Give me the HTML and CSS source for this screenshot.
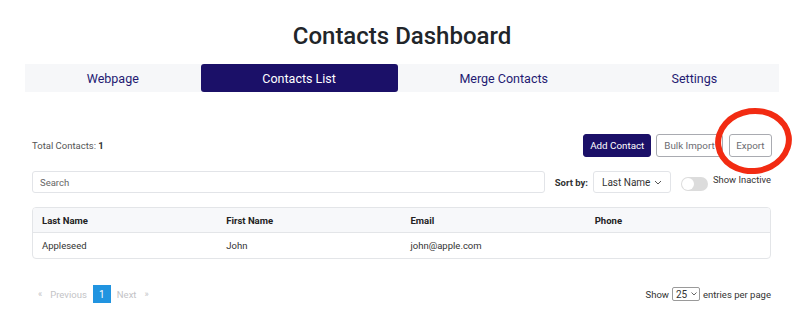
FILE: index.html
```html
<!DOCTYPE html>
<html lang="en">
<head>
<meta charset="utf-8">
<title>Contacts Dashboard</title>
<link rel="stylesheet" href="styles.css">
</head>
<body>
<div class="page">
  <h1 class="title">Contacts Dashboard</h1>
  <nav class="tabs">
    <a class="tab">Webpage</a>
    <a class="tab active">Contacts List</a>
    <a class="tab">Merge Contacts</a>
    <a class="tab">Settings</a>
  </nav>

  <div class="content">
    <div class="toolbar">
      <div class="total">Total Contacts: <b>1</b></div>
      <div class="actions">
        <button class="btn btn-primary">Add Contact</button>
        <button class="btn btn-outline bulk">Bulk Import</button>
        <button class="btn btn-outline export">Export<span class="annot"></span></button>
      </div>
    </div>

    <div class="filters">
      <div class="search">Search</div>
      <div class="sort">
        <span class="sort-label">Sort by:</span>
        <div class="select">Last Name
          <svg class="chev" width="8" height="5" viewBox="0 0 8 5"><path d="M1 1l3 3 3-3" fill="none" stroke="#555" stroke-width="1"/></svg>
        </div>
      </div>
      <div class="toggle-wrap">
        <span class="toggle"><span class="knob"></span></span>
        <span class="toggle-label">Show Inactive</span>
      </div>
    </div>

    <div class="table">
      <div class="row head">
        <div class="cell">Last Name</div>
        <div class="cell">First Name</div>
        <div class="cell">Email</div>
        <div class="cell">Phone</div>
      </div>
      <div class="row">
        <div class="cell">Appleseed</div>
        <div class="cell">John</div>
        <div class="cell">john@apple.com</div>
        <div class="cell"></div>
      </div>
    </div>

    <div class="footer">
      <div class="pager">
        <span class="pg-arrow left">«</span>
        <span class="pg-text">Previous</span>
        <span class="pg-num">1</span>
        <span class="pg-text">Next</span>
        <span class="pg-arrow right">»</span>
      </div>
      <div class="per-page">
        <span>Show</span>
        <span class="mini-select">25
          <svg width="6" height="4" viewBox="0 0 6 4"><path d="M0.5 0.5l2.5 2.5 2.5-2.5" fill="none" stroke="#555" stroke-width="0.9"/></svg>
        </span>
        <span>entries per page</span>
      </div>
    </div>
  </div>
</div>
</body>
</html>
```

FILE: styles.css
```css
* { box-sizing: border-box; }
html, body { margin: 0; background: #fff; }
body {
  font-family: Roboto, "Liberation Sans", Arial, sans-serif;
  color: #333;
  width: 800px;
  height: 333px;
  overflow: hidden;
}
.page {
  padding: 22px 21px 0 25px;
}
.title {
  margin: 0;
  text-align: center;
  font-size: 24px;
  line-height: 28px;
  font-weight: 500;
  color: #212529;
}
.tabs {
  margin-top: 14px;
  display: flex;
  background: #f6f7f9;
  height: 28px;
}
.tab {
  flex: 1 1 auto;
  display: flex;
  align-items: center;
  justify-content: center;
  font-size: 12.5px;
  color: #241a72;
  border-radius: 3px;
}
.tab.active {
  background: #1b1068;
  color: #fff;
}
.content {
  padding: 0 8px 0 7px;
}
.toolbar {
  margin-top: 42px;
  display: flex;
  align-items: center;
  justify-content: space-between;
  height: 23px;
}
.total {
  font-size: 9.5px;
  color: #555;
}
.total b { color: #333; font-weight: 700; }
.actions {
  display: flex;
  gap: 5px;
  align-items: center;
  margin-right: -1px;
}
.btn {
  font-family: inherit;
  height: 23px;
  padding: 0 6px;
  font-size: 9.8px;
  border-radius: 3px;
  margin: 0;
  white-space: nowrap;
}
.btn-primary {
  background: #1b1068;
  color: #fff;
  border: 1px solid #1b1068;
}
.btn-outline {
  background: #fff;
  color: #6c6c72;
  border: 1px solid #a9abb1;
}
.bulk {
  padding: 0 7px 0 7px;
}
.export {
  position: relative;
  padding: 0 6.5px;
  margin-left: 1px;
}
.annot {
  position: absolute;
  left: -15px;
  top: -27px;
  width: 77px;
  height: 66px;
  border: 6px solid #f22b12;
  border-radius: 50%;
  transform: rotate(-8deg);
}
.filters {
  margin-top: 14px;
  display: flex;
  align-items: center;
  height: 22px;
}
.search {
  flex: 1 1 auto;
  min-width: 0;
  height: 22px;
  border: 1px solid #e2e4e8;
  border-radius: 3px;
  font-size: 9.5px;
  color: #666;
  display: flex;
  align-items: center;
  padding-left: 7px;
}
.sort {
  flex: 0 0 auto;
  margin-left: 10px;
  display: flex;
  align-items: center;
  gap: 5px;
  white-space: nowrap;
}
.sort-label {
  font-size: 9.5px;
  font-weight: 700;
  color: #333;
}
.select {
  width: 78px;
  height: 22px;
  border: 1px solid #e2e4e8;
  border-radius: 3px;
  font-size: 10px;
  color: #333;
  display: flex;
  align-items: center;
  justify-content: space-between;
  padding: 0 8px 0 8px;
}
.toggle-wrap {
  flex: 0 0 auto;
  margin-left: 10px;
  display: flex;
  align-items: flex-start;
  gap: 5px;
  white-space: nowrap;
}
.toggle {
  width: 27px;
  height: 14px;
  border-radius: 7px;
  background: #dcdcdc;
  position: relative;
  margin-top: 4px;
}
.knob {
  position: absolute;
  left: 1px;
  top: 1px;
  width: 12px;
  height: 12px;
  border-radius: 50%;
  background: #fff;
}
.toggle-label {
  font-size: 9.4px;
  color: #333;
  line-height: 12px;
  margin-top: 1px;
}
.table {
  margin-top: 14px;
  border: 1px solid #e3e5e8;
  border-radius: 4px;
  overflow: hidden;
}
.row {
  display: grid;
  grid-template-columns: repeat(4, 1fr);
  height: 25px;
  align-items: center;
}
.row.head {
  background: #f7f8fa;
  border-bottom: 1px solid #e3e5e8;
  height: 25px;
}
.cell {
  padding-left: 9px;
  font-size: 9.5px;
  color: #333;
}
.head .cell {
  font-weight: 700;
  color: #222;
}
.footer {
  margin-top: 26px;
  display: flex;
  justify-content: space-between;
  align-items: center;
  height: 18px;
}
.pager {
  display: flex;
  align-items: center;
  font-size: 9.5px;
  color: #c3c3c6;
  padding-left: 6px;
}
.pg-arrow { font-size: 9px; }
.pg-arrow.left { margin-right: 2px; }
.pg-arrow.right { margin-left: 2px; }
.pg-text { margin: 0 6px; }
.pg-num {
  width: 18px;
  height: 18px;
  background: #2194e0;
  color: #fff;
  display: flex;
  align-items: center;
  justify-content: center;
  font-size: 10px;
}
.per-page {
  display: flex;
  align-items: center;
  gap: 3px;
  font-size: 9.5px;
  color: #333;
}
.mini-select {
  width: 28px;
  height: 14px;
  border: 1px solid #9a9a9a;
  border-radius: 2px;
  display: flex;
  align-items: center;
  justify-content: space-between;
  padding: 0 2px 0 3px;
  font-size: 10px;
}
```
